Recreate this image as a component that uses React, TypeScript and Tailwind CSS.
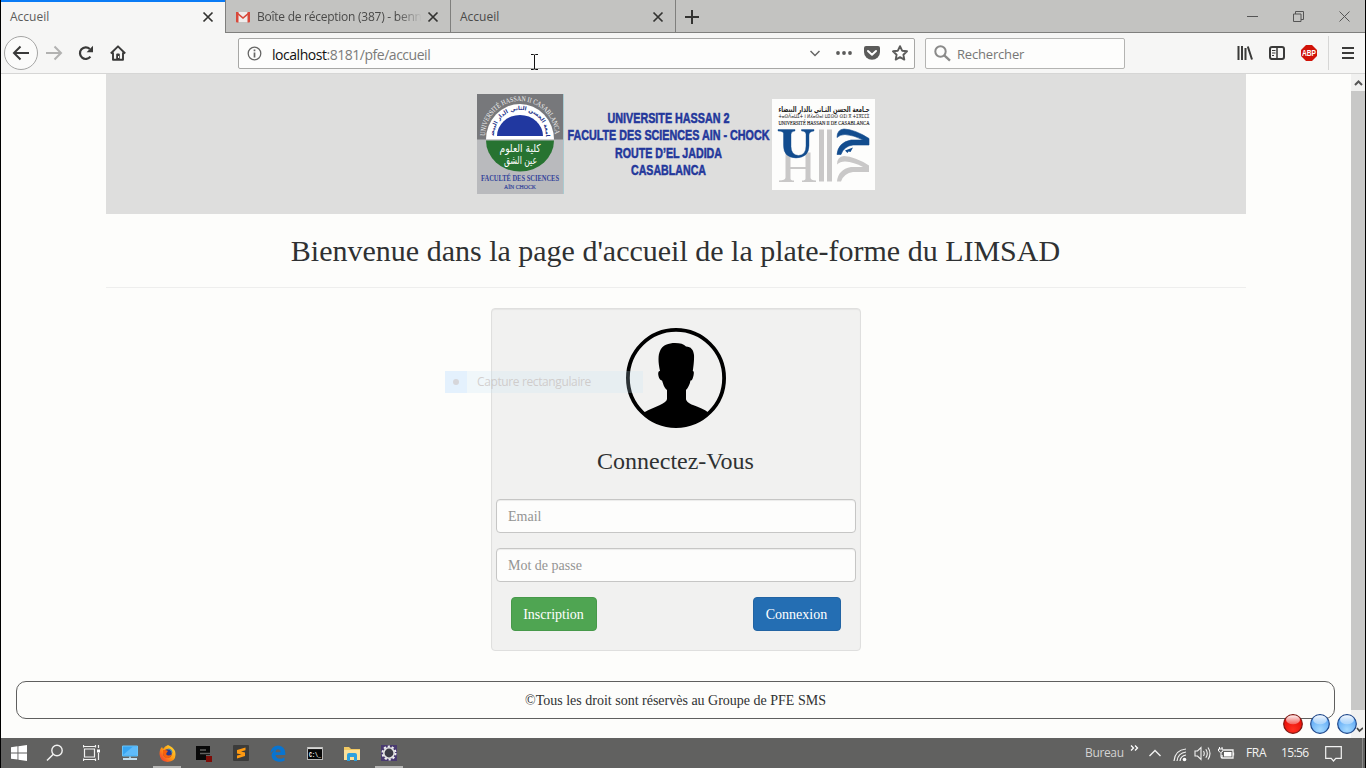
import type { ReactNode } from 'react';

const UI = "font-['Open_Sans','Noto_Sans',sans-serif]";

function Cross({ className = '' }: { className?: string }) {
  return (
    <svg width="12" height="12" viewBox="0 0 12 12" className={className}>
      <path d="M1.500 1.500l9 9M10.500 1.500l-9 9" stroke="#333331" strokeWidth="1.700" fill="none" />
    </svg>
  );
}

function TabBar() {
  return (
    <div className="flex h-[33px] w-full shrink-0 bg-[#c3c3c1] text-[12px] text-[#4a4a49]">
      <div className="flex w-[224px] items-center justify-between border-t-2 border-[#0a7bf5] bg-[#f6f6f5] pl-[9px] pr-[11px] text-[#5c5c5b]">
        <span className="-mt-px">Accueil</span>
        <Cross className="-mt-px" />
      </div>
      <div className="flex w-[226px] items-center border-x border-b border-[#7f7f7d] pl-[9px] pt-px">
        <svg width="16" height="12" viewBox="0 0 16 12" className="shrink-0">
          <path d="M2 1h12v10H2z" fill="#efeceb" />
          <path d="M2 1l6 5 6-5v2l-6 5-6-5z" fill="#d8493b" />
          <path d="M1 1h2.500v10.400H2a1 1 0 0 1-1-1zM12.500 1H15v9.400a1 1 0 0 1-1 1h-1.500z" fill="#d8493b" />
        </svg>
        <div className="ml-[6px] w-[165px] whitespace-nowrap tracking-[-0.25px] [mask-image:linear-gradient(to_right,black_85%,transparent)]">
          Boîte de réception (387) - benn
        </div>
        <Cross className="ml-[5px] shrink-0" />
      </div>
      <div className="flex w-[225px] items-center justify-between border-b border-r border-[#7f7f7d] pl-[9px] pr-[11px] pt-[2px]">
        <span>Accueil</span>
        <Cross />
      </div>
      <div className="flex flex-1 items-center justify-between border-b border-[#7f7f7d] pl-[9px] pr-[15px] pt-px">
        <svg width="14" height="14" viewBox="0 0 14 14">
          <path d="M7 0v14M0 7h14" stroke="#333331" strokeWidth="2" />
        </svg>
        <div className="flex items-center gap-[35px]">
          <svg width="11" height="11" viewBox="0 0 11 11">
            <path d="M0 5.500h11" stroke="#555" />
          </svg>
          <svg width="11" height="11" viewBox="0 0 11 11">
            <path d="M.5 3h7.500v7.500H.5zM2.500 3V.5h8v8H8" stroke="#555" fill="none" />
          </svg>
          <svg width="11" height="11" viewBox="0 0 11 11">
            <path d="M.5.5l10 10M10.500.5l-10 10" stroke="#555" fill="none" />
          </svg>
        </div>
      </div>
    </div>
  );
}

function NavBar() {
  return (
    <div className="flex h-[41px] w-full shrink-0 items-center border-b border-[#d6d6d5] bg-[#f6f6f5] pl-[3px]">
      <div className="flex size-[34px] items-center justify-center rounded-full border border-[#a5a5a4] bg-[#fbfbfa]">
        <svg width="18" height="16" viewBox="0 0 18 16">
          <path d="M17 8H2.500M8.500 1.500L2 8l6.500 6.500" stroke="#3a3a39" strokeWidth="2" fill="none" />
        </svg>
      </div>
      <div className="flex w-8 justify-center">
        <svg width="18" height="16" viewBox="0 0 18 16">
          <path d="M1 8h14.500M9.500 1.500L16 8l-6.500 6.500" stroke="#b2b2b1" strokeWidth="2" fill="none" />
        </svg>
      </div>
      <div className="flex w-8 justify-center">
        <svg width="16" height="16" viewBox="0 0 16 16">
          <path d="M12.400 11.700A5.800 5.800 0 1 1 11.800 4" stroke="#3a3a39" strokeWidth="2.200" fill="none" />
          <path d="M15 .8v6.400H8.600z" fill="#3a3a39" />
        </svg>
      </div>
      <div className="flex w-8 justify-center">
        <svg width="16" height="16" viewBox="0 0 16 16">
          <path d="M.8 8.500L8 1.300l7.200 7.200M3 7.500v7.300h10V7.500" stroke="#3a3a39" strokeWidth="1.900" fill="none" strokeLinejoin="round" />
          <path d="M6.200 15V9.500q0-1 1-1h1.600q1 0 1 1V15z" fill="#3a3a39" />
          <path d="M8 11h1v2H8z" fill="#f6f6f5" />
        </svg>
      </div>
      <div className="ml-[104px] flex h-[31px] w-[677px] items-center rounded-[2px] border border-[#a7a7a5] bg-[#fdfdfc] pl-[8px] pr-[6px]">
        <svg width="15" height="15" viewBox="0 0 15 15">
          <circle cx="7.500" cy="7.500" r="6.300" stroke="#666665" strokeWidth="1.300" fill="none" />
          <path d="M7.500 6.500v5M7.500 3.500v1.700" stroke="#666665" strokeWidth="1.700" />
        </svg>
        <span className="ml-[10px] mt-[2px] text-[14px] tracking-[-0.47px] text-[#7b7b7a]">
          <span className="text-[#111]">localhost</span>:8181/pfe/accueil
        </span>
        <svg width="10" height="7" viewBox="0 0 10 7" className="ml-auto">
          <path d="M.5 1L5 5.500 9.500 1" stroke="#666665" strokeWidth="1.500" fill="none" />
        </svg>
        <svg width="16" height="4" viewBox="0 0 16 4" className="ml-[16px]">
          <circle cx="2" cy="2" r="1.900" fill="#5b5b5a" />
          <circle cx="8" cy="2" r="1.900" fill="#5b5b5a" />
          <circle cx="14" cy="2" r="1.900" fill="#5b5b5a" />
        </svg>
        <svg width="16" height="16" viewBox="0 0 16 16" className="ml-[12px]">
          <path d="M2 1h12q2 0 2 2v4a8 7.800 0 0 1-16 0V3q0-2 2-2z" fill="#5b5b5a" />
          <path d="M4 6l4 3.700L12 6" stroke="#fff" strokeWidth="2" strokeLinecap="round" strokeLinejoin="round" fill="none" />
        </svg>
        <svg width="16" height="16" viewBox="0 0 16 16" className="ml-[12px]">
          <path d="M8 1.200l2.100 4.500 4.900.6-3.600 3.400.9 4.900L8 12.200l-4.300 2.400.9-4.900L1 6.300l4.900-.6z" stroke="#5b5b5a" strokeWidth="1.900" strokeLinejoin="round" fill="none" />
        </svg>
      </div>
      <div className="ml-[10px] flex h-[31px] w-[200px] items-center rounded-[2px] border border-[#b4b4b2] bg-[#fdfdfc] pl-[8px]">
        <svg width="17" height="17" viewBox="0 0 17 17">
          <circle cx="6.500" cy="6.500" r="5.200" stroke="#8a8a89" strokeWidth="2" fill="none" />
          <path d="M10.300 10.300l5.700 5.400" stroke="#8a8a89" strokeWidth="2.300" />
        </svg>
        <span className="ml-[6px] mt-[3px] text-[13px] tracking-[-0.18px] text-[#777776]">Rechercher</span>
      </div>
      <div className="ml-auto flex h-full items-center">
        <svg width="16" height="14" viewBox="0 0 16 14" className="mr-[16px]">
          <path d="M1.500 0v14M5 0v14M8.500 2v12M10.800.5l4.200 13" stroke="#3a3a39" strokeWidth="2" />
        </svg>
        <svg width="16" height="14" viewBox="0 0 16 14" className="mr-[16px]">
          <rect x="1" y="1" width="14" height="12" rx="2" stroke="#3a3a39" strokeWidth="2" fill="none" />
          <path d="M8 1v12" stroke="#3a3a39" strokeWidth="1.500" />
          <path d="M3 4.500h3.500M3 7h3.500M3 9.500h2" stroke="#3a3a39" />
        </svg>
        <svg width="16" height="16" viewBox="0 0 16 16" className="mr-[11px] overflow-visible">
          <path d="M5 0h6l5 5v6l-5 5H5l-5-5V5z" fill="#d11308" />
          <text x="8" y="11" textAnchor="middle" textLength="14" lengthAdjust="spacingAndGlyphs" fontSize="8.500" fontWeight="700" fill="#fff" fontFamily="Liberation Sans">ABP</text>
        </svg>
        <div className="mr-[13px] h-[34px] w-px bg-[#d6d6d5]" />
        <svg width="12" height="12" viewBox="0 0 12 12" className="mr-[11px]">
          <path d="M0 1h12M0 6h12M0 11h12" stroke="#3a3a39" strokeWidth="2" />
        </svg>
      </div>
    </div>
  );
}

function FacultyLogo() {
  return (
    <svg width="87" height="100" viewBox="0 0 87 100" className="overflow-visible">
      <defs>
        <path id="ringOuter" d="M8 42A35 35 0 0 1 78 42" />
        <path id="ringInner" d="M17 42A26 26 0 0 1 69 42" />
      </defs>
      <rect width="87" height="100" fill="#b9babd" />
      <rect width="87" height="45.500" fill="#77787b" />
      <path d="M9 45.500a34 35.500 0 0 1 68 0z" fill="#fff" />
      <path d="M20 42a23 21 0 0 1 46 0z" fill="#2138a0" />
      <path d="M9 46.500h68a34 31 0 0 1-68 0z" fill="#277331" />
      <text fontSize="7.200" fill="#f4f4f4" fontFamily="Liberation Serif">
        <textPath href="#ringOuter" textLength="108" lengthAdjust="spacingAndGlyphs">UNIVERSITÉ HASSAN II CASABLANCA</textPath>
      </text>
      <text fontSize="5.600" fontWeight="700" fill="#26358c" fontFamily="DejaVu Sans" textAnchor="middle">
        <textPath href="#ringInner" startOffset="50%">جامعة الحسن الثاني الدار البيضاء</textPath>
      </text>
      <g textAnchor="middle">
        <text x="43" y="58" textLength="41" lengthAdjust="spacingAndGlyphs" fontSize="11" fill="#fff" fontFamily="DejaVu Sans">كلية العلوم</text>
        <text x="43.500" y="70" textLength="33" lengthAdjust="spacingAndGlyphs" fontSize="11" fill="#fff" fontFamily="DejaVu Sans">عين الشق</text>
        <text x="43" y="87" textLength="78" lengthAdjust="spacingAndGlyphs" fontSize="7.600" fontWeight="700" fill="#33439a" fontFamily="Liberation Serif">FACULTÉ DES SCIENCES</text>
        <text x="43" y="94.500" textLength="32" lengthAdjust="spacingAndGlyphs" fontSize="6.600" fill="#33439a" stroke="#33439a" strokeWidth=".2" fontFamily="Liberation Serif">AÏN CHOCK</text>
      </g>
      <path d="M86.500 0v100" stroke="#a9cbd2" />
    </svg>
  );
}

function UniversityTitle() {
  return (
    <svg width="203" height="76" viewBox="0 0 203 76" className="overflow-visible">
      <g fill="#23379b" stroke="#23379b" strokeWidth=".55" fontFamily="Liberation Sans" fontWeight="700" fontSize="15.500" textAnchor="middle">
        <text x="101.500" y="17" textLength="122" lengthAdjust="spacingAndGlyphs">UNIVERSITE HASSAN 2</text>
        <text x="101.500" y="34" textLength="202" lengthAdjust="spacingAndGlyphs">FACULTE DES SCIENCES AIN - CHOCK</text>
        <text x="101.500" y="52" textLength="107" lengthAdjust="spacingAndGlyphs">ROUTE D’EL JADIDA</text>
        <text x="101.500" y="69" textLength="75" lengthAdjust="spacingAndGlyphs">CASABLANCA</text>
      </g>
    </svg>
  );
}

const HOOK = 'M64 38q0-8 7-8.500 11 .5 25 9.500v6.500H80q-9 1-12 9.500h-4q1-12 14-14.500h12q-9-5-18-5.500-5 0-8 3z';

function UniversityLogo() {
  return (
    <svg width="103" height="91" viewBox="0 0 103 91">
      <rect width="103" height="91" fill="#fdfdfc" />
      <g textAnchor="middle" fill="#222">
        <text x="52" y="13" textLength="91" lengthAdjust="spacingAndGlyphs" fontSize="8" fontWeight="700" fontFamily="DejaVu Sans">جـامعة الحسن الثـاني بالدار البيضاء</text>
        <text x="52" y="19" textLength="91" lengthAdjust="spacingAndGlyphs" fontSize="5" fontFamily="DejaVu Sans">ⵜⴰⵙⴷⴰⵡⵉⵜ ⵏ ⵍⵃⴰⵙⴰⵏ ⵡⵉⵙⵙ ⵙⵉⵏ ⴳ ⵜⵉⴳⵎⵎⵉ</text>
        <text x="52" y="26" textLength="91" lengthAdjust="spacingAndGlyphs" fontSize="5.500" stroke="#222" strokeWidth=".15" fontFamily="Liberation Serif">UNIVERSITÉ HASSAN II DE CASABLANCA</text>
      </g>
      <g transform="translate(1 .5)">
        <g fill="#c9c8c8">
          <path d="M46 30h5v52h-5zM54 30h5v52h-5z" />
          <path d="M12.500 53h5v26q0 2 3.500 2v1.500H6V81q6.500 0 6.500-3zM32.500 53h5v25q0 3 5.500 3v1.500H29V81q3.500 0 3.500-2zM17 67.500h16v2H17z" />
          <path d={HOOK} transform="translate(0 27)" />
        </g>
        <path d="M5 30h17v1.500q-4 0-4 3.500v12q0 8.500 7.500 9 7.500-.5 7.500-9.500V35q0-3.500-4.500-3.500V30H41v1.500q-5 .5-5 4V46q0 12-13 12.500Q10.500 58 10.500 46V34q0-2.500-5.500-2.500z" fill="#124c8e" stroke="#124c8e" strokeWidth=".4" />
        <path d={HOOK} fill="#124c8e" stroke="#124c8e" strokeWidth=".6" />
        <path d="M72 51l8-3-2.500 4.500-2-.5-1 1.500z" fill="#124c8e" />
      </g>
    </svg>
  );
}

function Avatar() {
  return (
    <svg width="100" height="100" viewBox="0 0 100 100">
      <circle cx="50" cy="50" r="48.100" fill="none" stroke="#000" strokeWidth="3.800" />
      <path d="M17 85C24 81 30 79 34 77 38 75 41 73 41 71V62C38 60 37 55 36 52.500 33 52 31.500 46 32.500 44 32.800 43 33.500 43 34 43 32 34 32 27 34 23 36 17 43 15 49 15 54 15 58 16 60 18.500 65 18.500 67.500 22 68 27 68.300 32 67.500 38 66.800 43 68.500 43 67.800 47 67 49.500 66.300 52 65.500 52.500 64.500 52.500 64 56 62 60 60 62V71C60 73 63 75.500 67 77 72 79 78 81 83 85A49 49 0 0 1 17 85z" />
    </svg>
  );
}

function Field({ label, type }: { label: string; type: string }) {
  return (
    <input
      type={type}
      placeholder={label}
      className="mb-[15px] block h-[34px] w-full rounded-[4px] border border-[#c6c6c5] bg-[#fdfdfc] px-[11px] pt-[2px] text-[14px] shadow-[inset_0_1px_1px_rgba(0,0,0,0.07)] placeholder:text-[#949493]"
    />
  );
}

function Page() {
  return (
    <div className="relative flex h-[664px] w-full">
      <div className="flex flex-1 flex-col bg-[#fdfdfb] font-['Liberation_Serif',serif] text-[#2f3132]">
        <div className="mx-auto w-[1140px]">
          <div className="flex h-[140px] items-center justify-center bg-[#dededd]">
            <FacultyLogo />
            <div className="ml-[3px]">
              <UniversityTitle />
            </div>
            <div className="ml-[2px] mt-px">
              <UniversityLogo />
            </div>
          </div>
          <h1 className="mt-[20px] pr-px text-center text-[30px] leading-[33px]">
            Bienvenue dans la page d'accueil de la plate-forme du LIMSAD
          </h1>
          <div className="mt-[20px] h-px bg-[#eeeeed]" />
        </div>
        <form className="mx-auto mt-[20px] h-[343px] w-[370px] rounded-[4px] border border-[#dfdfde] bg-[#f1f1f0] px-[4px] pt-[19px] shadow-[inset_0_1px_1px_rgba(0,0,0,0.05)]">
          <div className="flex justify-center">
            <Avatar />
          </div>
          <h2 className="mb-[25px] mt-[20px] pr-px text-center text-[24px] leading-[26px]">Connectez-Vous</h2>
          <Field label="Email" type="text" />
          <Field label="Mot de passe" type="password" />
          <div className="flex justify-between px-[15px] text-[14px] text-white">
            <button type="button" className="h-[34px] w-[86px] rounded-[4px] border border-[#47994a] bg-[#4fa552] pr-px">Inscription</button>
            <button type="button" className="h-[34px] w-[88px] rounded-[4px] border border-[#2264a3] bg-[#246eb3] pr-px">Connexion</button>
          </div>
        </form>
        <footer className="ml-[15px] mr-[16px] mt-[30px] flex h-[38px] items-center justify-center rounded-[10px] border border-[#5f5f5e] text-[14px]">
          ©Tous les droit sont réservès au Groupe de PFE SMS
        </footer>
      </div>
      <div className="flex w-[14px] flex-col bg-[#f1f1f0]">
        <div className="flex h-[17px] items-center justify-center">
          <svg width="9" height="6" viewBox="0 0 9 6">
            <path d="M1 5l3.500-3.500L8 5" stroke="#555" strokeWidth="2" fill="none" />
          </svg>
        </div>
        <div className="h-[619px] bg-[#c8c8c7]" />
      </div>
      <div className={`absolute left-[444px] top-[297px] flex h-[22px] w-[198px] items-center bg-[#c4e4f7]/22 text-[12px] tracking-[-0.38px] text-[#bfb5b1]/60 ${UI}`}>
        <div className="flex h-full w-[22px] items-center justify-center bg-[#dcecff]/60">
          <div className="size-[6px] rounded-full bg-[#d6d6da]" />
        </div>
        <span className="ml-[10px]">Capture rectangulaire</span>
      </div>
      <div className="absolute right-[8px] top-[640px] flex gap-[7px]">
        <Orb tone="red" />
        <Orb tone="blue" />
        <Orb tone="blue" />
      </div>
      <svg width="9" height="6" viewBox="0 0 9 6" className="absolute right-[2px] top-[653px]">
        <path d="M3 1l2.500 3L9 1" stroke="#444" strokeWidth="1.700" fill="none" />
      </svg>
    </div>
  );
}

function Orb({ tone }: { tone: 'red' | 'blue' }) {
  const red = tone === 'red';
  return (
    <svg width="20" height="20" viewBox="0 0 20 20">
      <defs>
        <linearGradient id={`gloss-${tone}`} x1="0" y1="0" x2="0" y2="1">
          <stop offset="0" stopColor="#fff" stopOpacity=".95" />
          <stop offset="1" stopColor="#fff" stopOpacity=".3" />
        </linearGradient>
        <radialGradient id={`ball-${tone}`} cx=".5" cy=".8" r=".7">
          <stop offset="0" stopColor={red ? '#ff3020' : '#a6daff'} />
          <stop offset="1" stopColor={red ? '#e40b05' : '#5aa6f5'} />
        </radialGradient>
      </defs>
      <circle cx="10" cy="10" r="9.300" fill={`url(#ball-${tone})`} stroke={red ? '#7d1712' : '#1d4588'} strokeWidth="1.200" />
      <ellipse cx="10" cy="5.800" rx="7" ry="4.500" fill={`url(#gloss-${tone})`} />
    </svg>
  );
}

function Task({ children, active, w = 'w-[37px]' }: { children: ReactNode; active?: boolean; w?: string }) {
  return (
    <div className={`relative flex h-full items-center justify-center ${w}`}>
      {children}
      {active && <div className="absolute bottom-0 h-[2px] w-[28px] bg-[#b5b5b4]" />}
    </div>
  );
}

function Taskbar() {
  return (
    <div className="flex h-[30px] w-full shrink-0 items-center bg-[#616160] text-[12px] text-[#f2f2f1]">
      <Task w="w-[36px]">
        <svg width="16" height="16" viewBox="0 0 16 16" fill="#fff">
          <path d="M0 2.300L6.500 1.300v6.200H0zM7.400 1.200L16 0v7.500H7.400zM0 8.400h6.500v6.200L0 13.700zM7.400 8.400H16V16l-8.600-1.200z" />
        </svg>
      </Task>
      <Task w="w-[36px]">
        <svg width="18" height="18" viewBox="0 0 18 18">
          <circle cx="11" cy="6.500" r="5.200" stroke="#f2f2f1" strokeWidth="1.400" fill="none" />
          <path d="M7.300 10.300L1 16.500" stroke="#f2f2f1" strokeWidth="1.500" />
        </svg>
      </Task>
      <Task w="w-[37px]">
        <svg width="17" height="16" viewBox="0 0 17 16">
          <path d="M1.500 4h10v8h-10zM.5 0v2.500M.5 1.500h12M12.500 0v2.500M.5 16v-2.500M.5 14.500h12M12.500 16v-2.500M15.500 0v3M15.500 8v7" stroke="#f2f2f1" strokeWidth="1.200" fill="none" />
          <path d="M14 4.500h3v3h-3z" fill="#fff" />
        </svg>
      </Task>
      <Task w="w-[39px]">
        <svg width="16" height="16" viewBox="0 0 16 16">
          <path d="M.5 1h15v10H.5z" fill="#37a5f3" stroke="#69c5fa" />
          <path d="M1 10L11 1.500h4V10z" fill="#5fbbfa" />
          <path d="M7 11.500h2V13H7z" fill="#9cc8df" />
          <path d="M1 13h14v2H1z" fill="#c4dfef" />
        </svg>
      </Task>
      <Task active w="w-[36px]">
        <svg width="17" height="17" viewBox="0 0 17 17">
          <defs>
            <linearGradient id="flame" x1="1" y1="0" x2="0" y2="1">
              <stop offset="0" stopColor="#ffe23a" />
              <stop offset=".5" stopColor="#ff980f" />
              <stop offset="1" stopColor="#f0283c" />
            </linearGradient>
          </defs>
          <path d="M9 0q5 2 7 6 2.500 10-7.500 11Q1 16.500.5 9 .5 4 3 2l1 2q2-3 5-4z" fill="url(#flame)" />
          <circle cx="8.500" cy="8.500" r="4.300" fill="#263a91" />
          <path d="M4 5q3-.5 5 1l-1.500 2q-1 2 2 2.500 2 0 3-1-1 4-5 3.500Q4 12 4 8z" fill="#f6600c" />
          <path d="M8.500 3.500q5 0 5 5l-2-3z" fill="#1b86cf" />
        </svg>
      </Task>
      <Task>
        <svg width="17" height="17" viewBox="0 0 17 17">
          <path d="M1 1h14v9h-4v5H1z" fill="#090909" />
          <path d="M5 5h6M5 8.500h10" stroke="#616160" strokeWidth="1.400" />
          <path d="M11 11h6v6h-6z" fill="#7e0d08" />
        </svg>
      </Task>
      <Task>
        <svg width="16" height="16" viewBox="0 0 16 16">
          <rect width="16" height="16" rx="1" fill="#3c3c3b" />
          <path d="M12.500 2.500L4 5v3.500l4.500 1L4 10.500v3L12 11V7.500L8 6.500l4.500-1.200z" fill="#ff9a11" />
        </svg>
      </Task>
      <Task>
        <svg width="16" height="17" viewBox="0 0 16 17">
          <path d="M.5 8Q1 1 8 .5q7 .5 7.300 7.500v2H5.500q.5 3.500 4.500 3.700 2.500 0 4.500-1.200v3.300q-3 1.200-6 1Q2 16 1.500 10.500 2 6 6 4.800 3 5 .5 8zM5.600 7.300h5q0-3-2.500-3T5.600 7.300z" fill="#0874d0" fillRule="evenodd" />
        </svg>
      </Task>
      <Task>
        <svg width="16" height="13" viewBox="0 0 16 13">
          <rect x=".5" y=".5" width="15" height="12" fill="#060606" stroke="#b7b7b6" />
          <path d="M1 1.300h14" stroke="#d6d6d5" strokeWidth="1.600" />
          <text x="2" y="9.800" textLength="12" lengthAdjust="spacingAndGlyphs" fontSize="7" fontWeight="700" fill="#fff" fontFamily="Liberation Mono">C:\_</text>
        </svg>
      </Task>
      <Task>
        <svg width="16" height="15" viewBox="0 0 16 15">
          <path d="M0 1h5l2 2h9v11H0z" fill="#f2c962" />
          <path d="M0 4h16v10H0z" fill="#fbe19a" />
          <path d="M3 15V9q0-2 2-2h6q2 0 2 2v6h-3v-4H6v4z" fill="#2ca1df" />
        </svg>
      </Task>
      <Task active>
        <svg width="16" height="16" viewBox="0 0 16 16">
          <rect width="16" height="16" fill="#493a70" />
          <circle cx="8" cy="8" r="6.500" fill="none" stroke="#f0f0f0" strokeWidth="2" strokeDasharray="2.200 1.880" />
          <circle cx="8" cy="8" r="5.200" fill="#3c3c46" stroke="#e4e4e4" strokeWidth="1.600" />
        </svg>
      </Task>
      <div className="ml-auto flex h-full items-center tracking-[-0.35px]">
        <span className="w-[45px] text-[#d3d3d2]">Bureau</span>
        <svg width="9" height="6" viewBox="0 0 9 6" className="-mt-[11px]">
          <path d="M1 .5L3.500 3 1 5.500M5 .5L7.500 3 5 5.500" stroke="#fff" strokeWidth="1.300" fill="none" />
        </svg>
        <svg width="12" height="8" viewBox="0 0 12 8" className="ml-[10px]">
          <path d="M.5 7L6 1.500 11.500 7" stroke="#f2f2f1" strokeWidth="1.400" fill="none" />
        </svg>
        <svg width="14" height="14" viewBox="0 0 14 14" className="ml-[12px] mt-1">
          <path d="M1 13Q2 2 13 1M4 13q1-8 9-9M7 13q.5-5 6-6" stroke="#f2f2f1" strokeWidth="1.200" fill="none" />
          <circle cx="11.500" cy="11.500" r="1.800" fill="#fff" />
        </svg>
        <svg width="17" height="15" viewBox="0 0 17 15" className="ml-[7px]">
          <path d="M1 5h2.500L7 1.500v12L3.500 10H1zM9.500 5q1.500 2.500 0 5M11.800 3.200q3 4.300 0 8.600M14 1.500q4 6 0 12" stroke="#f2f2f1" strokeWidth="1.100" fill="none" />
        </svg>
        <svg width="17" height="13" viewBox="0 0 17 13" className="ml-[7px]">
          <path d="M5.500 3H15v8H4V8M15.500 5.500v3" stroke="#f2f2f1" strokeWidth="1.300" fill="none" />
          <path d="M6 5h7.500v4.500H6z" fill="#fff" />
          <path d="M1.500 0v2M4 0v2M.5 2h4.500v2L3 5.500v5H4M.5 2v2l2 1.500" stroke="#fff" fill="none" />
        </svg>
        <span className="ml-[11px] w-[35px]">FRA</span>
        <span className="w-[44px] tracking-[-0.6px]">15:56</span>
        <svg width="17" height="16" viewBox="0 0 17 16" className="mr-[20px] mt-px">
          <path d="M.7.7h15.600v11.600h-5.500L8.500 15l-2.300-2.700H.7z" stroke="#f2f2f1" strokeWidth="1.200" fill="none" />
        </svg>
        <div className="h-full w-px bg-[#8b8b8a]" />
        <div className="w-[2px]" />
      </div>
    </div>
  );
}

export default function App() {
  return (
    <div className={`relative flex h-[768px] w-[1366px] flex-col overflow-hidden border-x border-black ${UI}`}>
      <TabBar />
      <NavBar />
      <Page />
      <Taskbar />
      <svg width="9" height="16" viewBox="0 0 9 16" className="absolute left-[529px] top-[54px]">
        <path d="M1 .5h2.500L4.500 1l1-.5H8M4.500 1v14M1 15.500h2.500l1-.5 1 .5H8" stroke="#111" fill="none" />
      </svg>
    </div>
  );
}
